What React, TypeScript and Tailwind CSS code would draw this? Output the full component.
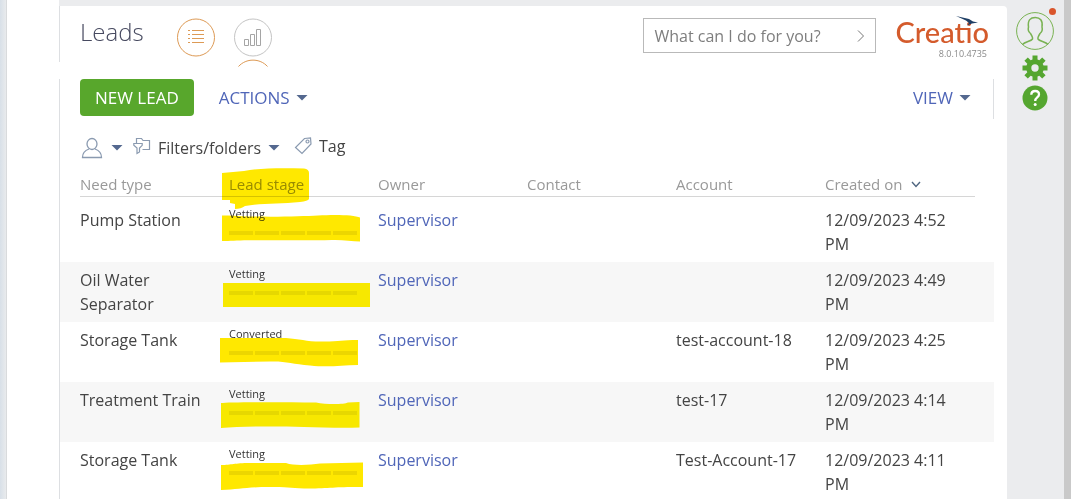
type Lead = {
    need: string
    stage: string
    owner: string
    contact?: string
    account?: string
    created: string
    mark: string
}

const leads: Lead[] = [
    {
        need: "Pump Station", stage: "Vetting", owner: "Supervisor", created: "12/09/2023 4:52 PM",
        mark: "M2 13.5 H8 C40 15.5 80 14.5 98 13.5 C112 12.5 134 12.5 140 15.5 V39.5 C132 39.5 122 37.5 112 38 C80 39 30 37.5 8 39 H2 Z",
    },
    {
        need: "Oil Water Separator", stage: "Vetting", owner: "Supervisor", created: "12/09/2023 4:49 PM",
        mark: "M3 21 H150 V45 H3 Z",
    },
    {
        need: "Storage Tank", stage: "Converted", owner: "Supervisor", account: "test-account-18", created: "12/09/2023 4:25 PM",
        mark: "M0 16 H66 C80 17 88 20 104 19.5 C120 19.5 122 18 138 18 V43 C120 43.5 108 45.5 90 43.5 C72 42 66 39 50 39.5 L0 40.5 Z",
    },
    {
        need: "Treatment Train", stage: "Vetting", owner: "Supervisor", account: "test-17", created: "12/09/2023 4:14 PM",
        mark: "M1 21 C8 20 60 20 96 20.5 C106 22.5 124 22.5 128 20.5 L139.500 20 V45.500 C120 46.500 100 45 84 45 C50 44 20 44.500 1 46 Z",
    },
    {
        need: "Storage Tank", stage: "Vetting", owner: "Supervisor", account: "Test-Account-17", created: "12/09/2023 4:11 PM",
        mark: "M1 23 C12 23 14 21 30 21 H66 C74 24 90 23 100 21.500 L143 20.500 V45 C115 44.500 110 46.500 84 46.500 C70 46 66 45 50 45 C26 45 20 47.500 1 48 Z",
    },
]

const Caret = () => (
    <svg className="w-3 h-2 shrink-0" viewBox="0 0 12 8" fill="#54688f" aria-hidden="true">
        <path d="M.5 1h11L6 6.500z" />
    </svg>
)

const ListIcon = () => (
    <svg className="size-10" viewBox="0 0 40 40" fill="none" stroke="#dd9a55" aria-hidden="true">
        <circle cx="20" cy="19.500" r="18.500" />
        <path d="M12 12.500h2M12 16.500h2M12 20.500h2M12 24.500h2M16 12.500h12M16 16.500h12M16 20.500h12M16 24.500h12" />
    </svg>
)

const ChartIcon = () => (
    <svg className="w-10 h-[49px]" viewBox="0 0 40 49" fill="none" stroke="#c4c4c4" aria-hidden="true">
        <circle cx="20" cy="19.500" r="18.500" />
        <path d="M11.500 21.500h4v6h-4zM17.500 16.500h4v11h-4zM23.500 11.500h4v16h-4z" stroke="#a5a5a5" />
        <path d="M5.500 48.500C13 40 27 40 34.500 48.500" stroke="#dd9a55" />
    </svg>
)

const Logo = () => (
    <div className="relative flex flex-col items-end">
        <span className="font-[Lato,sans-serif] text-[29px] leading-8 font-medium text-[#d45b2c]">Creatio</span>
        <svg className="absolute right-[11px] top-0 w-[22px] h-[11px]" viewBox="0 0 22 11" aria-hidden="true">
            <path d="M0 0 13 3 17 5.500 22 6.500 16 7.500 11 9.500 13 7 10 4.500Z" fill="#1f3f66" />
        </svg>
        <span className="pr-0.5 text-[9px] leading-3 text-[#8a8a8a]">8.0.10.4735</span>
    </div>
)

const Rail = () => (
    <aside className="flex w-[57px] shrink-0 flex-col items-center gap-1 pt-3 pr-0.5">
        <button aria-label="Profile" className="relative">
            <svg className="size-[38px]" viewBox="0 0 38 38" fill="none" stroke="#79b252" aria-hidden="true">
                <circle cx="19" cy="19" r="18.400" />
                <path d="M6.500 32.500C9 29.500 15 29.500 16.500 27 17 25.500 15.800 23.500 14.500 21.500 12.500 20 12 17 12.500 15 11.500 8 14.500 5.500 19.300 5.500S27 8.500 26 15C26.500 17 26 20 24 21.500 22.700 23.500 21.500 25.500 22 27 23.500 29.500 29.500 29.500 32 32.500" strokeWidth="1.500" />
            </svg>
            <span className="absolute -top-1 -right-0.5 size-[7px] rounded-full bg-[#d9552c]" />
        </button>
        <button aria-label="Settings" className="pt-px">
            <svg className="size-[26px]" viewBox="0 0 26 26" fill="#55a630" aria-hidden="true">
                <path fillRule="evenodd" d="M10.500.5h5v4l1.800.8 2.900-2.900 3.400 3.400-2.900 2.900.8 1.800h4v5h-4l-.8 1.800 2.900 2.900-3.400 3.400-2.900-2.900-1.800.8v4h-5v-4l-1.800-.8-2.900 2.900-3.400-3.400 2.900-2.900-.8-1.800h-4v-5h4l.8-1.800-2.900-2.900 3.400-3.400 2.900 2.900 1.800-.8zM13 9.300a3.700 3.700 0 100 7.400 3.700 3.700 0 000-7.400z" />
            </svg>
        </button>
        <button aria-label="Help">
            <svg className="size-[26px]" viewBox="0 0 26 26" fill="none" aria-hidden="true">
                <circle cx="13" cy="13" r="12.500" fill="#55a630" />
                <path d="M9.300 9.800C9.300 7.300 11 6 13.200 6s3.800 1.400 3.800 3.500c0 3-3.800 3-3.800 6.500" stroke="#fff" strokeWidth="2.300" />
                <circle cx="13.200" cy="19.600" r="1.500" fill="#fff" />
            </svg>
        </button>
    </aside>
)

const Header = () => (
    <header className="flex h-14 items-start rounded-tr border-l border-[#dddfe2] bg-white pl-5 pr-[18px]">
        <h1 className="mt-2.5 w-24 text-2xl leading-8 font-light text-[#474a60]">Leads</h1>
        <button aria-label="List view" className="mt-3"><ListIcon /></button>
        <button aria-label="Chart view" className="mt-3 ml-[17px]"><ChartIcon /></button>
        <form className="mt-3 ml-auto mr-[19px] flex h-[35px] w-[233px] items-center border border-[#b9b9b9] pl-2.5 pr-2">
            <input
                aria-label="Command line"
                placeholder="What can I do for you?"
                className="min-w-0 flex-1 text-base text-[#7e7e7e] outline-none placeholder:text-[#7e7e7e]"
            />
            <button aria-label="Run" type="button">
                <svg className="size-3" viewBox="0 0 12 12" fill="none" stroke="#777" aria-hidden="true">
                    <path d="M3 .5 8.500 6 3 11.500" />
                </svg>
            </button>
        </form>
        <div className="mt-2.5"><Logo /></div>
    </header>
)

const Toolbar = () => (
    <div className="flex h-10 items-start border-x border-[#dddfe2] pl-5 pr-[22px] text-[17px]">
        <button className="h-[37px] rounded-sm bg-[#58a72c] px-[15px] text-white">NEW LEAD</button>
        <button className="ml-[25px] flex h-[37px] items-center gap-1.5 text-[#5066b8]">ACTIONS <Caret /></button>
        <button className="ml-auto flex h-[37px] items-center gap-1.5 text-[#5066b8]">VIEW <Caret /></button>
    </div>
)

const Filters = () => (
    <div className="flex h-14 items-center pl-[21px] pt-0.5 text-base text-[#444]">
        <button aria-label="Owner filter" className="flex items-center gap-2">
            <svg className="size-[22px]" viewBox="0 0 22 22" fill="none" stroke="#8a9ab0" strokeWidth="1.300" aria-hidden="true">
                <ellipse cx="11" cy="7" rx="5" ry="5.500" />
                <path d="M8 12C3.500 13.500 1.500 16 1.500 20.500h19C20.500 16 18.500 13.500 14 12" />
            </svg>
            <Caret />
        </button>
        <button className="ml-2.5 flex items-center gap-[7px]">
            <svg className="size-[18px] -mt-1" viewBox="0 0 18 18" fill="none" stroke="#8a9ab0" strokeWidth="1.200" aria-hidden="true">
                <path d="M3.500 6V1.500h5l1.500 2h6.500v9H9.500" />
                <path d="M.8 6.500h8.400v1.800L6.500 11v4L4 16.500V11L.8 8.300z" />
            </svg>
            Filters/folders <Caret />
        </button>
        <button className="mb-1 ml-3.5 flex items-center gap-[7px]">
            <svg className="size-[18px]" viewBox="0 0 18 18" fill="none" stroke="#8a9ab0" strokeWidth="1.200" aria-hidden="true">
                <path d="M10.500 1.500 16.500 1l.5 6-9 9.500L1.500 10.500z" />
                <circle cx="13.500" cy="4.500" r="1.500" />
            </svg>
            Tag
        </button>
    </div>
)

const StageCell = ({ stage, mark }: { stage: string; mark: string }) => (
    <td className="relative pt-[5px] align-top">
        <div className="text-[11px] leading-3.5 text-[#333]">{stage}</div>
        <div className="mt-2.5 flex w-32 gap-0.5">
            {[0, 1, 2, 3, 4].map((n) => (
                <span key={n} className="h-1 flex-1 bg-[#ececec] group-even:bg-[#e6e6e6]" />
            ))}
        </div>
        <svg className="pointer-events-none absolute top-0 -left-[9px] h-[60px] w-[152px] fill-[#ffe800] mix-blend-multiply group-even:fill-[#fff000]" viewBox="0 0 152 60" aria-hidden="true">
            <path d={mark} />
        </svg>
    </td>
)

const th = "h-[22px] border-b border-[#d6d6d6] text-left"

const LeadsTable = () => (
    <table className="w-full table-fixed border-collapse text-base leading-6 text-[#444]">
        <colgroup>
            <col className="w-[169px]" />
            <col />
            <col />
            <col />
            <col />
            <col className="w-[169px]" />
        </colgroup>
        <thead className="text-[15px] leading-[18px] text-[#999]">
            <tr className="h-[27px] align-top">
                <th className="p-0 pl-5 font-normal"><div className={th}>Need type</div></th>
                <th className="relative p-0 font-normal">
                    <div className={th}>Lead stage</div>
                    <svg className="pointer-events-none absolute -top-2 -left-[9px] h-[44px] w-[92px] mix-blend-multiply" viewBox="0 0 92 44" fill="#ffe800" aria-hidden="true">
                        <path d="M2 6 L24 4 C40 1 60 1 84 1.500 Q89 2 89 6 V32 Q88 34 80 35 C60 37 40 36 25 39 Q21 42 15 42 V37 L10 36 V33 H2 Z" />
                    </svg>
                </th>
                <th className="p-0 font-normal"><div className={th}>Owner</div></th>
                <th className="p-0 font-normal"><div className={th}>Contact</div></th>
                <th className="p-0 font-normal"><div className={th}>Account</div></th>
                <th className="p-0 pr-[19px] font-normal">
                    <div className={th}>
                        <button className="flex items-center gap-2">
                            Created on
                            <svg className="size-3" viewBox="0 0 12 12" fill="none" stroke="#4f6680" strokeWidth="1.400" aria-hidden="true">
                                <path d="M2 4 6 8.500 10 4" />
                            </svg>
                        </button>
                    </div>
                </th>
            </tr>
        </thead>
        <tbody>
            {leads.map((lead) => (
                <tr key={lead.created} className="group h-[60px] align-top even:bg-[#f7f7f7]">
                    <td className="py-1.5 pl-5 pr-4">{lead.need}</td>
                    <StageCell stage={lead.stage} mark={lead.mark} />
                    <td className="py-1.5"><a href="#" className="text-[#5066b8]">{lead.owner}</a></td>
                    <td className="py-1.5">{lead.contact}</td>
                    <td className="py-1.5">{lead.account}</td>
                    <td className="py-1.5 pr-9">{lead.created}</td>
                </tr>
            ))}
        </tbody>
    </table>
)

const App = () => {
    return (
        <div className="flex h-screen overflow-hidden bg-[#ebecee] font-['Open_Sans',sans-serif]">
            <div className="w-[7px] shrink-0 border-r border-[#d9dbdd] bg-linear-to-r from-[#d8e0e8] to-[#e9ebed]" />
            <div className="w-[52px] shrink-0 bg-white" />
            <main className="min-w-0 flex-1 pt-1.5">
                <Header />
                <div className="bg-white pt-[17px] pr-[13px]">
                    <Toolbar />
                    <div className="border-l border-[#dddfe2]">
                        <Filters />
                        <LeadsTable />
                    </div>
                </div>
            </main>
            <Rail />
            <div className="w-[7px] shrink-0 bg-[#c9c9c9]" />
        </div>
    )
}

export default App
